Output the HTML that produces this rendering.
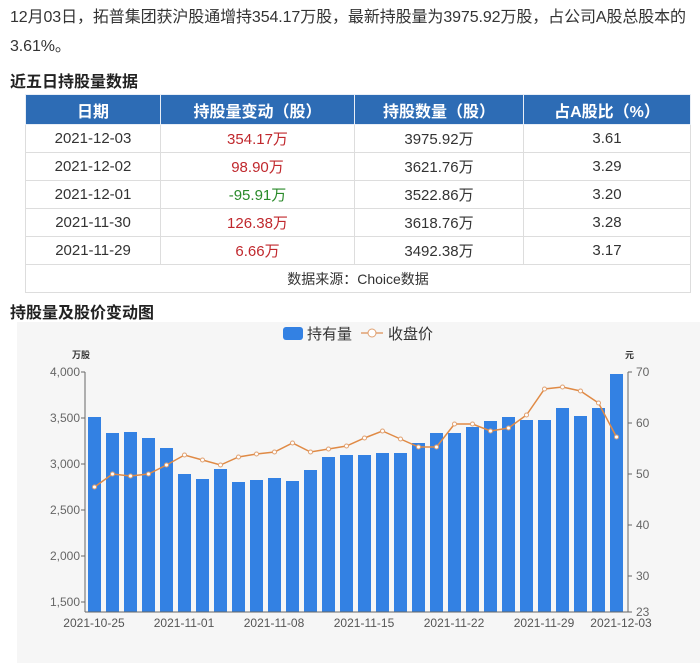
<!DOCTYPE html>
<html><head><meta charset="utf-8"><style>
body{margin:0;width:700px;height:665px;background:#fff;font-family:"Liberation Sans","Noto Sans CJK SC",sans-serif;color:#333;position:relative;overflow:hidden}
.p{position:absolute;left:10px;font-size:16px;line-height:29px;top:3px;width:690px;letter-spacing:-0.1px}
h3{position:absolute;margin:0;left:10px;font-size:16px;font-weight:bold;color:#222}
table{position:absolute;left:25px;top:94px;width:666px;border-collapse:collapse;font-size:15px}
td,th{border:1px solid #ddd;text-align:center;height:27px;padding:0}
th{background:#2d6cb5;color:#fff;font-weight:bold;font-size:16px;height:29px;border-color:#e8eef6}
.r{color:#c0282d}.g{color:#2a8a2a}
</style></head><body>
<div class="p">12月03日，拓普集团获沪股通增持354.17万股，最新持股量为3975.92万股，占公司A股总股本的3.61%。</div>
<h3 style="top:68px">近五日持股量数据</h3>
<table>
<tr><th style="width:134px">日期</th><th style="width:193px">持股量变动（股）</th><th style="width:168px">持股数量（股）</th><th>占A股比（%）</th></tr>
<tr><td>2021-12-03</td><td class="r">354.17万</td><td>3975.92万</td><td>3.61</td></tr>
<tr><td>2021-12-02</td><td class="r">98.90万</td><td>3621.76万</td><td>3.29</td></tr>
<tr><td>2021-12-01</td><td class="g">-95.91万</td><td>3522.86万</td><td>3.20</td></tr>
<tr><td>2021-11-30</td><td class="r">126.38万</td><td>3618.76万</td><td>3.28</td></tr>
<tr><td>2021-11-29</td><td class="r">6.66万</td><td>3492.38万</td><td>3.17</td></tr>
<tr><td colspan="4" style="font-size:14px">数据来源：Choice数据</td></tr>
</table>
<h3 style="top:299px">持股量及股价变动图</h3>
<svg style="position:absolute;left:0;top:0" width="700" height="665" font-family="Liberation Sans, Noto Sans CJK SC, sans-serif">
<rect x="17" y="322" width="683" height="341" fill="#f6f6f6"/>
<rect x="283" y="327" width="20" height="13" rx="3" fill="#3381e3"/>
<text x="307" y="339" font-size="15" fill="#333">持有量</text>
<line x1="361" y1="333" x2="383" y2="333" stroke="#e0a070" stroke-width="1.5"/><circle cx="372" cy="333" r="4" fill="#fff" stroke="#e0a070"/>
<text x="388" y="339" font-size="15" fill="#333">收盘价</text>
<text x="72" y="358" font-size="9" font-weight="bold" fill="#333">万股</text>
<text x="625" y="358" font-size="9" font-weight="bold" fill="#333">元</text>
<g fill="#3381e3" id="bars"></g>
<g font-size="12" fill="#666" text-anchor="end">
<text x="80" y="376">4,000</text><text x="80" y="422">3,500</text><text x="80" y="468">3,000</text><text x="80" y="514">2,500</text><text x="80" y="560">2,000</text><text x="80" y="606">1,500</text>
</g>
<g stroke="#666"><line x1="85" y1="372" x2="85" y2="612"/><line x1="628" y1="372" x2="628" y2="612"/><line x1="85" y1="612" x2="628" y2="612"/>
<line x1="81" y1="372" x2="85" y2="372"/><line x1="81" y1="418" x2="85" y2="418"/><line x1="81" y1="464" x2="85" y2="464"/><line x1="81" y1="510" x2="85" y2="510"/><line x1="81" y1="556" x2="85" y2="556"/><line x1="81" y1="602" x2="85" y2="602"/>
<line x1="628" y1="372" x2="632" y2="372"/><line x1="628" y1="423" x2="632" y2="423"/><line x1="628" y1="474" x2="632" y2="474"/><line x1="628" y1="525" x2="632" y2="525"/><line x1="628" y1="576" x2="632" y2="576"/><line x1="628" y1="612" x2="632" y2="612"/></g>
<g font-size="12" fill="#666"><text x="636" y="376">70</text><text x="636" y="427">60</text><text x="636" y="478">50</text><text x="636" y="529">40</text><text x="636" y="580">30</text><text x="636" y="616">23</text></g>
<g font-size="12" fill="#555" text-anchor="middle">
<text x="94" y="627">2021-10-25</text><text x="184" y="627">2021-11-01</text><text x="274" y="627">2021-11-08</text><text x="364" y="627">2021-11-15</text><text x="454" y="627">2021-11-22</text><text x="544" y="627">2021-11-29</text><text x="621" y="627">2021-12-03</text>
</g>
<polyline id="ln" fill="none" stroke="#e08a45" stroke-width="1.5"/>
<g id="dots" fill="#fff" stroke="#e0a070"></g>
</svg>
<script>
var t=[417,433,432,438,448,474,479,469,482,480,478,481,470,457,455,455,453,453,443,433,433,427,421,417,420,420,408,416,408,374];
var l=[487,474,476,474,465,455,460,465,457,454,452,443,452,449,446,438,431,439,447,447,424,424,431,428,415,389,387,391,403,437];
var ns="http://www.w3.org/2000/svg",b=document.getElementById("bars"),d=document.getElementById("dots"),pts=[];
for(var i=0;i<30;i++){var x=88+i*18;var r=document.createElementNS(ns,"rect");r.setAttribute("x",x);r.setAttribute("y",t[i]);r.setAttribute("width",13);r.setAttribute("height",612-t[i]);b.appendChild(r);
var cx=x+6.5;pts.push(cx+","+l[i]);var c=document.createElementNS(ns,"circle");c.setAttribute("cx",cx);c.setAttribute("cy",l[i]);c.setAttribute("r",2);d.appendChild(c);}
document.getElementById("ln").setAttribute("points",pts.join(" "));
</script>
</body></html>
